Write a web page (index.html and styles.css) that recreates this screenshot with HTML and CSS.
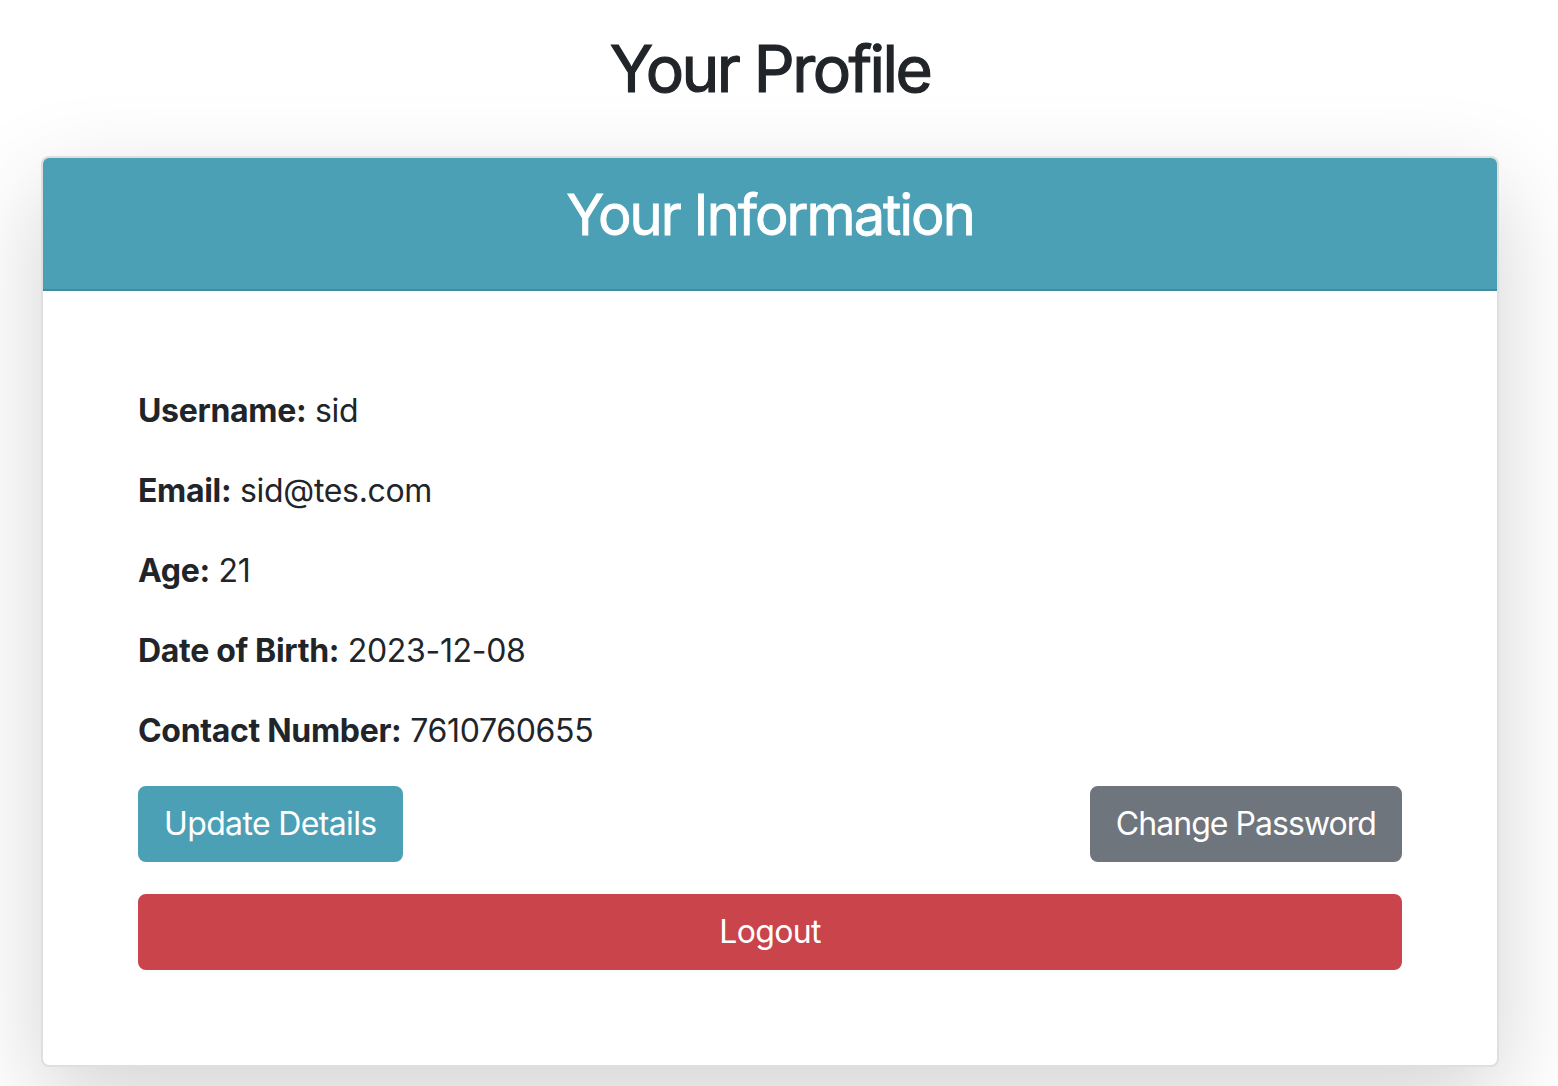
FILE: index.html
```html
<!DOCTYPE html>
<html lang="en">
<head>
<meta charset="utf-8">
<title>Your Profile</title>
<link rel="stylesheet" href="styles.css">
</head>
<body>
<div class="page">
  <h1 class="page-title">Your Profile</h1>
  <div class="card">
    <div class="card-header">
      <h3 class="card-title">Your Information</h3>
    </div>
    <div class="card-body">
      <p class="info"><strong>Username:</strong> sid</p>
      <p class="info"><strong>Email:</strong> sid@tes.com</p>
      <p class="info"><strong>Age:</strong> 21</p>
      <p class="info"><strong>Date of Birth:</strong> 2023-12-08</p>
      <p class="info"><strong>Contact Number:</strong> 7610760655</p>
      <div class="actions">
        <a class="btn btn-info" href="#">Update Details</a>
        <a class="btn btn-secondary" href="#">Change Password</a>
      </div>
      <a class="btn btn-danger btn-block" href="#">Logout</a>
    </div>
  </div>
</div>
</body>
</html>
```

FILE: styles.css
```css
* { box-sizing: border-box; }

html, body {
  margin: 0;
  padding: 0;
  background: #ffffff;
}

body {
  font-family: Inter, "Liberation Sans", Arial, sans-serif;
  font-size: 32px;
  line-height: 48px;
  color: #212529;
  letter-spacing: -0.01em;
}

.page {
  width: 1540px;
  padding: 30px 41px 20px;
}

.page-title {
  margin: 0 0 49px;
  font-size: 64px;
  line-height: 77px;
  font-weight: 400;
  text-align: center;
  letter-spacing: -0.04em;
  -webkit-text-stroke: 1.2px #212529;
}

.card {
  background: #fff;
  border: 2px solid rgba(0, 0, 0, 0.125);
  border-radius: 8px;
  box-shadow: 0 32px 96px rgba(0, 0, 0, 0.175);
  overflow: hidden;
}

.card-header {
  background: #4ba0b5;
  border-bottom: 2px solid #418c9e;
  padding: 24px 40px;
  text-align: center;
}

.card-title {
  margin: 0 0 16px;
  color: #fff;
  font-size: 56px;
  line-height: 67px;
  font-weight: 400;
  letter-spacing: -0.035em;
  -webkit-text-stroke: 0.8px #ffffff;
}

.card-body {
  padding: 96px 95px 95px;
}

.info {
  margin: 0 0 32px;
}

.info:last-of-type {
  margin-bottom: 31px;
}

.info strong {
  font-weight: 700;
}

.actions {
  display: flex;
  justify-content: space-between;
  margin-bottom: 32px;
}

.btn {
  display: inline-block;
  padding: 12px 24px;
  border: 2px solid transparent;
  border-radius: 8px;
  color: #fff;
  text-decoration: none;
  font-size: 32px;
  line-height: 48px;
  text-align: center;
  letter-spacing: -0.02em;
}

.btn-secondary {
  letter-spacing: -0.03em;
}

.btn-info { background: #4ba0b5; border-color: #4ba0b5; }
.btn-secondary { background: #6f757d; border-color: #6f757d; }
.btn-danger { background: #ca444b; border-color: #ca444b; }

.btn-block {
  display: block;
  width: 100%;
}
```
